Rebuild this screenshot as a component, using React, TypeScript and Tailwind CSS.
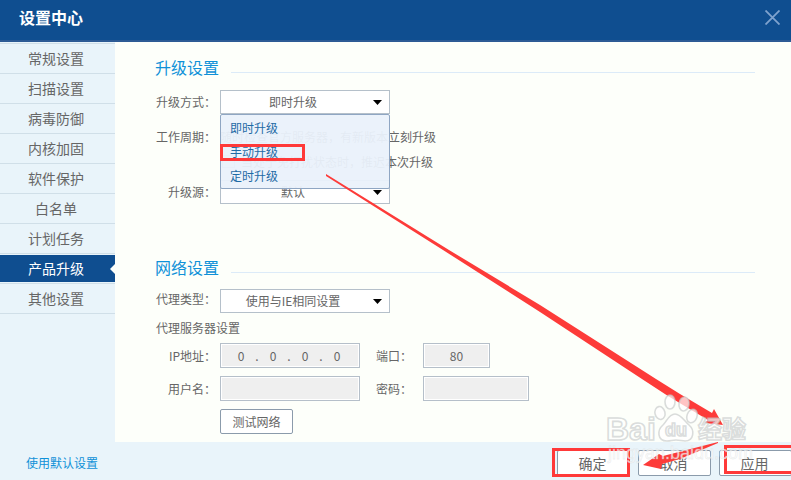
import { useState } from "react";
import clsx from "clsx";

const NAV_ITEMS = [
  "常规设置",
  "扫描设置",
  "病毒防御",
  "内核加固",
  "软件保护",
  "白名单",
  "计划任务",
  "产品升级",
  "其他设置",
];

const UPGRADE_MODES = ["即时升级", "手动升级", "定时升级"];

const inputClass =
  "h-[25px] border border-[#b5bfc9] bg-[#efefef] px-2 text-center text-[12px] text-[#666] ring-1 ring-inset ring-white outline-none";

const labelClass = "mr-1 w-[61px] shrink-0 whitespace-nowrap text-right";

const footerButtonClass =
  "h-[26px] w-[73px] shrink-0 rounded-xs border border-[#8b9bab] bg-white pr-0.5 text-[14px] leading-6";

const Dropdown = ({ id, options }: { id: string; options: string[] }) => (
  <div className="relative h-6 w-[170px]">
    <select
      id={id}
      className="h-6 w-full appearance-none border border-[#b5c0ca] bg-white pr-6 text-[12px] text-[#666] outline-none [text-align-last:center]"
    >
      {options.map((option) => (
        <option key={option}>{option}</option>
      ))}
    </select>
    <svg
      className="pointer-events-none absolute top-[10px] right-2 h-[5px] w-[9px]"
      viewBox="0 0 9 5"
    >
      <path d="M0 0h9L4.5 5z" fill="#000" />
    </svg>
  </div>
);

const SectionTitle = ({ title }: { title: string }) => (
  <div className="flex h-6 items-center gap-3">
    <h2 className="text-[16px] leading-5 text-[#0f91d8]">{title}</h2>
    <hr className="mt-2.5 flex-1 border-[#dcebf8]" />
  </div>
);

const IpField = () => {
  const [parts, setParts] = useState(["0", "0", "0", "0"]);

  const updatePart = (index: number, value: string) => {
    setParts(parts.map((part, i) => (i === index ? value : part)));
  };

  return (
    <div className="flex h-[25px] w-[140px] items-center border border-[#b5bfc9] bg-[#efefef] pl-3 ring-1 ring-inset ring-white">
      {parts.map((part, index) => (
        <div key={index} className="flex w-8 shrink-0 items-center">
          <input
            id={index === 0 ? "ip" : undefined}
            aria-label={`IP地址 ${index + 1}`}
            value={part}
            onChange={(e) => updatePart(index, e.target.value)}
            className="w-4 bg-transparent text-center text-[12px] leading-5 outline-none"
          />
          {index < 3 && <span className="w-5 text-center">.</span>}
        </div>
      ))}
    </div>
  );
};

const Watermark = () => (
  <g fill="#fff" fillOpacity="0.7" stroke="#c6caca" strokeOpacity="0.65">
    <g strokeWidth="1.6">
      <ellipse cx="660" cy="413" rx="5" ry="6.5" transform="rotate(-12 660 413)" />
      <ellipse cx="670" cy="402" rx="5" ry="7" />
      <ellipse cx="684" cy="404" rx="5" ry="7" transform="rotate(8 684 404)" />
      <ellipse cx="692" cy="416" rx="5" ry="7" transform="rotate(20 692 416)" />
      <path d="M675 414c-6 0-8 7-12 11-6 5-6 16 4 16 4 0 5-1 9-1s6 1 9 1c9 0 10-11 4-16-5-4-8-11-14-11z" />
    </g>
    <g
      fontFamily="Liberation Sans, Noto Sans CJK SC, sans-serif"
      fontWeight="700"
      strokeWidth="1.6"
    >
      <text x="606" y="440" fontSize="32">
        Bai
      </text>
      <text x="665" y="436" fontSize="18">
        du
      </text>
      <text x="698" y="438" fontSize="24">
        经验
      </text>
    </g>
    <text
      x="608"
      y="459"
      fontSize="18"
      fontFamily="Liberation Sans, sans-serif"
      strokeOpacity="0.3"
      strokeWidth="0.8"
    >
      jingyan.baidu.com
    </text>
  </g>
);

// Tutorial marks drawn over the dialog: boxes, arrows and the site mark
const Annotations = () => (
  <svg
    className="pointer-events-none absolute top-0 left-0 z-20 h-[480px] w-[791px]"
    viewBox="0 0 791 480"
  >
    <g fill="none" stroke="#ff3939" strokeWidth="3">
      <rect x="221.5" y="145.5" width="82" height="14" />
      <rect x="553.5" y="449.5" width="75" height="26" />
      <rect x="725.5" y="446.5" width="68" height="26" />
    </g>
    <g fill="#fd3b39">
      <path d="M326 174L449 250L540 305L656 379L680 394L712 413L714 409L723 425L705 423L708 420L668 396L645 381L540 312L443 250L326 176z" />
      <path d="M718 442L663 456L659 454L643 465L661 469L662 464L680 459L718 443z" />
    </g>
    <Watermark />
  </svg>
);

const App = () => {
  const [active, setActive] = useState("产品升级");
  const [mode, setMode] = useState("即时升级");

  return (
    <div className="relative flex min-h-screen flex-col overflow-hidden bg-[#e9f4fa] font-['Noto_Sans_CJK_SC',sans-serif] text-[12px] leading-5 text-[#666]">
      <header className="flex h-[42px] items-center justify-between border-b-2 border-[#2d5b95] bg-[#0f4e90] pr-2.5 pl-[19px]">
        <h1 className="-mt-1.5 text-[16px] leading-6 font-bold text-white">
          设置中心
        </h1>
        <button type="button" aria-label="关闭" className="-mt-1.5 p-px">
          <svg className="h-[15px] w-[15px]" viewBox="0 0 15 15">
            <path
              d="M.5.5l14 14M14.500.5l-14 14"
              stroke="#7fa2ce"
              strokeWidth="1.8"
            />
          </svg>
        </button>
      </header>

      <div className="flex flex-1">
        <nav className="w-[115px] shrink-0 pt-px">
          <ul className="border-t border-[#d0dfe8]">
            {NAV_ITEMS.map((item) => (
              <li key={item} className="h-[30px] border-b border-[#d0dfe8] py-px">
                <button
                  type="button"
                  onClick={() => setActive(item)}
                  className={clsx(
                    "flex h-[27px] w-full items-center text-[14px]",
                    active === item && "bg-[#0f4e90] text-white",
                  )}
                >
                  <span className="w-28 shrink-0 pb-0.5 text-center">{item}</span>
                  {active === item && (
                    <svg className="-ml-0.5 h-2.5 w-[5px] shrink-0" viewBox="0 0 5 10">
                      <path d="M5 0v10L0 5z" fill="#fdfffa" />
                    </svg>
                  )}
                </button>
              </li>
            ))}
          </ul>
        </nav>

        <main className="flex-1 bg-[#fdfffa] pt-[13px] pr-9 pb-2 pl-10">
          <SectionTitle title="升级设置" />

          <div className="mt-[11px] flex items-center">
            <label htmlFor="mode" className={labelClass}>
              升级方式：
            </label>
            <div className="relative">
              <Dropdown id="mode" options={UPGRADE_MODES} />
              <ul
                role="listbox"
                aria-label="升级方式"
                className="absolute top-6 left-0 z-10 h-[75px] w-[170px] rounded-xs border border-[#8fa6c3] bg-[#eaf1fb]/95 pt-px"
              >
                {UPGRADE_MODES.map((option) => (
                  <li key={option} role="option" aria-selected={mode === option}>
                    <button
                      type="button"
                      onClick={() => setMode(option)}
                      className="h-6 w-full pl-[9px] text-left text-[#1f6ba5]"
                    >
                      {option}
                    </button>
                  </li>
                ))}
              </ul>
            </div>
          </div>

          <div className="mt-2.5 flex leading-[25px]">
            <span className={labelClass}>工作周期：</span>
            <div className="whitespace-nowrap">
              <p>随时检查官方服务器，有新版本立刻升级</p>
              <label className="flex items-center gap-1.5">
                <input
                  type="checkbox"
                  defaultChecked
                  className="ml-0.5 h-[13px] w-[13px] appearance-none border border-[#b5c0ca] bg-white checked:bg-[#f2f7ea]"
                />
                当处于免打扰状态时，推迟本次升级
              </label>
            </div>
          </div>

          <div className="mt-1.5 flex items-center">
            <label htmlFor="source" className={labelClass}>
              升级源：
            </label>
            <Dropdown id="source" options={["默认"]} />
          </div>

          <div className="mt-[51px]">
            <SectionTitle title="网络设置" />
          </div>

          <div className="mt-2.5 flex items-start">
            <label htmlFor="proxy" className={labelClass}>
              代理类型：
            </label>
            <Dropdown id="proxy" options={["使用与IE相同设置"]} />
          </div>

          <h3 className="mt-[5px] ml-px">代理服务器设置</h3>

          <div className="mt-[5px] flex items-center">
            <label htmlFor="ip" className={labelClass}>
              IP地址：
            </label>
            <IpField />
            <label htmlFor="port" className="ml-4 w-[47px]">
              端口：
            </label>
            <input id="port" defaultValue="80" className={clsx(inputClass, "w-[67px]")} />
          </div>

          <div className="mt-2 flex items-center">
            <label htmlFor="user" className={labelClass}>
              用户名：
            </label>
            <input id="user" className={clsx(inputClass, "w-[140px]")} />
            <label htmlFor="password" className="ml-4 w-[47px]">
              密码：
            </label>
            <input
              id="password"
              type="password"
              className={clsx(inputClass, "w-[106px]")}
            />
          </div>

          <button
            type="button"
            className="mt-2 ml-[65px] block h-[25px] w-[73px] rounded-xs border border-[#8b9bab] bg-white"
          >
            测试网络
          </button>
        </main>
      </div>

      <footer className="flex h-[38px] items-center justify-between pt-1 pl-[26px]">
        <a href="#" className="text-[#0f91d8]">
          使用默认设置
        </a>
        <div className="-mr-px flex gap-2">
          <button type="button" className={footerButtonClass}>
            确定
          </button>
          <button type="button" className={footerButtonClass}>
            取消
          </button>
          <button type="button" className={footerButtonClass}>
            应用
          </button>
        </div>
      </footer>

      <Annotations />
    </div>
  );
};

export default App;
